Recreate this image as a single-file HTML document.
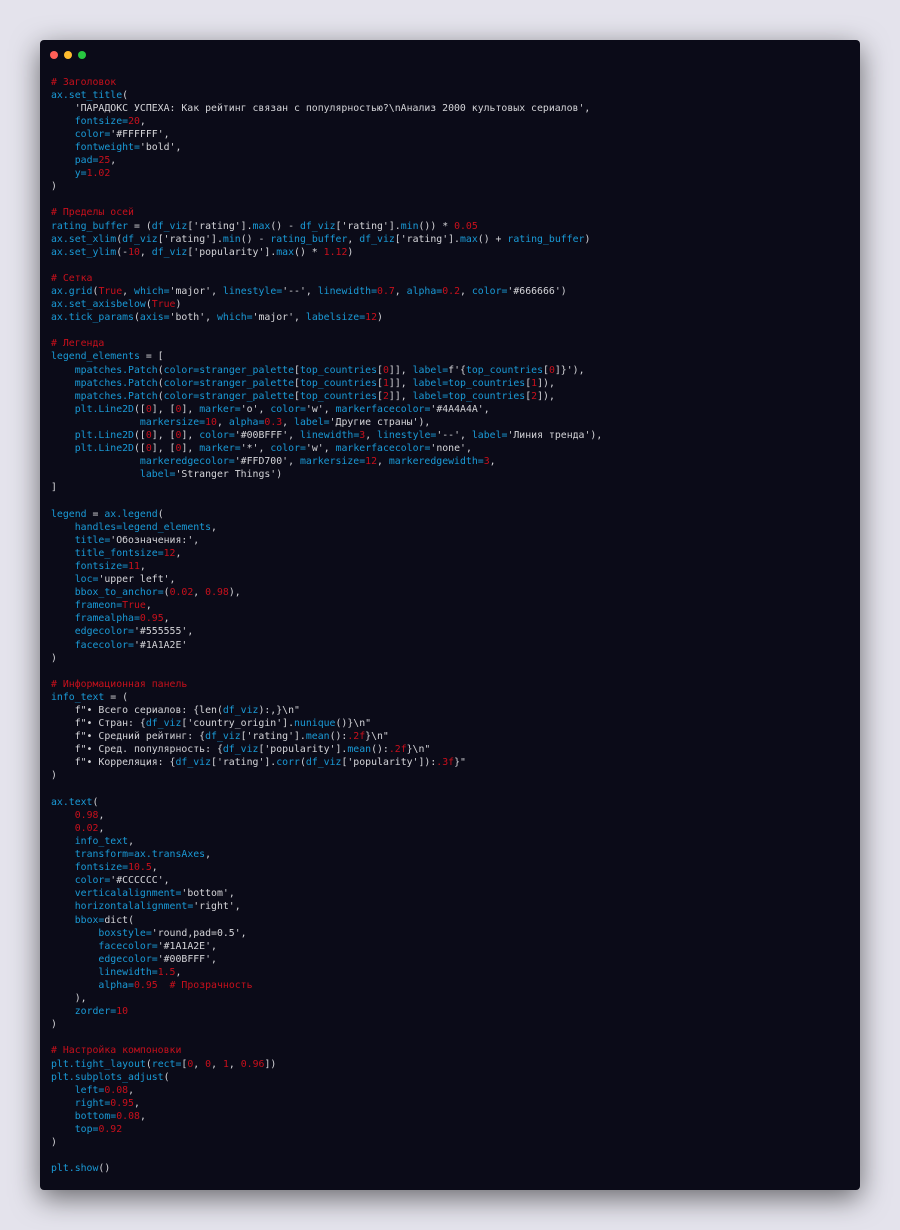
<!DOCTYPE html>
<html><head><meta charset="utf-8"><style>
html,body{margin:0;padding:0;}
body{width:900px;height:1230px;background:#e4e3ec;position:relative;overflow:hidden;}
.win{position:absolute;left:40px;top:40px;width:820px;height:1150px;background:#0b0b18;border-radius:4px;box-shadow:0 8px 28px rgba(0,0,0,0.55);}
.dot{position:absolute;top:11px;width:8px;height:8px;border-radius:50%;}
pre{position:absolute;left:11px;top:35.5px;margin:0;font-family:"DejaVu Sans Mono","Liberation Mono",monospace;font-size:9.85px;line-height:13.1px;color:#d4d4d8;white-space:pre;}
.b{color:#1a9ad6}.r{color:#c8101c}
</style></head><body>
<div class="win">
<div class="dot" style="left:10px;background:#ff5f57"></div>
<div class="dot" style="left:24px;background:#febc2e"></div>
<div class="dot" style="left:38px;background:#28c840"></div>
<pre><span class="r"># Заголовок</span>
<span class="b">ax.set_title</span>(
    'ПАРАДОКС УСПЕХА: Как рейтинг связан с популярностью?\nАнализ 2000 культовых сериалов',
    <span class="b">fontsize=</span><span class="r">20</span>,
    <span class="b">color=</span>'#FFFFFF',
    <span class="b">fontweight=</span>'bold',
    <span class="b">pad=</span><span class="r">25</span>,
    <span class="b">y=</span><span class="r">1.02</span>
)

<span class="r"># Пределы осей</span>
<span class="b">rating_buffer</span> = (<span class="b">df_viz</span>['rating'].<span class="b">max</span>() - <span class="b">df_viz</span>['rating'].<span class="b">min</span>()) * <span class="r">0.05</span>
<span class="b">ax.set_xlim</span>(<span class="b">df_viz</span>['rating'].<span class="b">min</span>() - <span class="b">rating_buffer</span>, <span class="b">df_viz</span>['rating'].<span class="b">max</span>() + <span class="b">rating_buffer</span>)
<span class="b">ax.set_ylim</span>(-<span class="r">10</span>, <span class="b">df_viz</span>['popularity'].<span class="b">max</span>() * <span class="r">1.12</span>)

<span class="r"># Сетка</span>
<span class="b">ax.grid</span>(<span class="r">True</span>, <span class="b">which=</span>'major', <span class="b">linestyle=</span>'--', <span class="b">linewidth=</span><span class="r">0.7</span>, <span class="b">alpha=</span><span class="r">0.2</span>, <span class="b">color=</span>'#666666')
<span class="b">ax.set_axisbelow</span>(<span class="r">True</span>)
<span class="b">ax.tick_params</span>(<span class="b">axis=</span>'both', <span class="b">which=</span>'major', <span class="b">labelsize=</span><span class="r">12</span>)

<span class="r"># Легенда</span>
<span class="b">legend_elements</span> = [
    <span class="b">mpatches.Patch</span>(<span class="b">color=stranger_palette</span>[<span class="b">top_countries</span>[<span class="r">0</span>]], <span class="b">label=</span>f'{<span class="b">top_countries</span>[<span class="r">0</span>]}'),
    <span class="b">mpatches.Patch</span>(<span class="b">color=stranger_palette</span>[<span class="b">top_countries</span>[<span class="r">1</span>]], <span class="b">label=top_countries</span>[<span class="r">1</span>]),
    <span class="b">mpatches.Patch</span>(<span class="b">color=stranger_palette</span>[<span class="b">top_countries</span>[<span class="r">2</span>]], <span class="b">label=top_countries</span>[<span class="r">2</span>]),
    <span class="b">plt.Line2D</span>([<span class="r">0</span>], [<span class="r">0</span>], <span class="b">marker=</span>'o', <span class="b">color=</span>'w', <span class="b">markerfacecolor=</span>'#4A4A4A',
               <span class="b">markersize=</span><span class="r">10</span>, <span class="b">alpha=</span><span class="r">0.3</span>, <span class="b">label=</span>'Другие страны'),
    <span class="b">plt.Line2D</span>([<span class="r">0</span>], [<span class="r">0</span>], <span class="b">color=</span>'#00BFFF', <span class="b">linewidth=</span><span class="r">3</span>, <span class="b">linestyle=</span>'--', <span class="b">label=</span>'Линия тренда'),
    <span class="b">plt.Line2D</span>([<span class="r">0</span>], [<span class="r">0</span>], <span class="b">marker=</span>'*', <span class="b">color=</span>'w', <span class="b">markerfacecolor=</span>'none',
               <span class="b">markeredgecolor=</span>'#FFD700', <span class="b">markersize=</span><span class="r">12</span>, <span class="b">markeredgewidth=</span><span class="r">3</span>,
               <span class="b">label=</span>'Stranger Things')
]

<span class="b">legend</span> = <span class="b">ax.legend</span>(
    <span class="b">handles=legend_elements</span>,
    <span class="b">title=</span>'Обозначения:',
    <span class="b">title_fontsize=</span><span class="r">12</span>,
    <span class="b">fontsize=</span><span class="r">11</span>,
    <span class="b">loc=</span>'upper left',
    <span class="b">bbox_to_anchor=</span>(<span class="r">0.02</span>, <span class="r">0.98</span>),
    <span class="b">frameon=</span><span class="r">True</span>,
    <span class="b">framealpha=</span><span class="r">0.95</span>,
    <span class="b">edgecolor=</span>'#555555',
    <span class="b">facecolor=</span>'#1A1A2E'
)

<span class="r"># Информационная панель</span>
<span class="b">info_text</span> = (
    f"• Всего сериалов: {len(<span class="b">df_viz</span>):,}\n"
    f"• Стран: {<span class="b">df_viz</span>['country_origin'].<span class="b">nunique</span>()}\n"
    f"• Средний рейтинг: {<span class="b">df_viz</span>['rating'].<span class="b">mean</span>():<span class="r">.2f</span>}\n"
    f"• Сред. популярность: {<span class="b">df_viz</span>['popularity'].<span class="b">mean</span>():<span class="r">.2f</span>}\n"
    f"• Корреляция: {<span class="b">df_viz</span>['rating'].<span class="b">corr</span>(<span class="b">df_viz</span>['popularity']):<span class="r">.3f</span>}"
)

<span class="b">ax.text</span>(
    <span class="r">0.98</span>,
    <span class="r">0.02</span>,
    <span class="b">info_text</span>,
    <span class="b">transform=ax.transAxes</span>,
    <span class="b">fontsize=</span><span class="r">10.5</span>,
    <span class="b">color=</span>'#CCCCCC',
    <span class="b">verticalalignment=</span>'bottom',
    <span class="b">horizontalalignment=</span>'right',
    <span class="b">bbox=</span>dict(
        <span class="b">boxstyle=</span>'round,pad=0.5',
        <span class="b">facecolor=</span>'#1A1A2E',
        <span class="b">edgecolor=</span>'#00BFFF',
        <span class="b">linewidth=</span><span class="r">1.5</span>,
        <span class="b">alpha=</span><span class="r">0.95</span>  <span class="r"># Прозрачность</span>
    ),
    <span class="b">zorder=</span><span class="r">10</span>
)

<span class="r"># Настройка компоновки</span>
<span class="b">plt.tight_layout</span>(<span class="b">rect=</span>[<span class="r">0</span>, <span class="r">0</span>, <span class="r">1</span>, <span class="r">0.96</span>])
<span class="b">plt.subplots_adjust</span>(
    <span class="b">left=</span><span class="r">0.08</span>,
    <span class="b">right=</span><span class="r">0.95</span>,
    <span class="b">bottom=</span><span class="r">0.08</span>,
    <span class="b">top=</span><span class="r">0.92</span>
)

<span class="b">plt.show</span>()</pre>
</div>
</body></html>
